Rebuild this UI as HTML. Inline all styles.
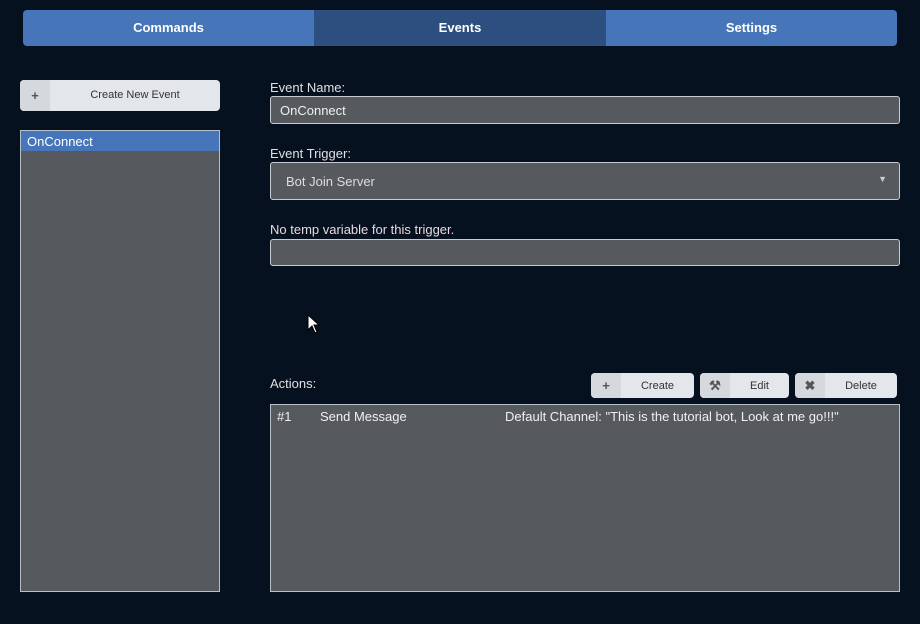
<!DOCTYPE html>
<html><head><style>
*{box-sizing:border-box;margin:0;padding:0}
body{width:920px;height:624px;background:#06111f;font-family:"Liberation Sans",sans-serif;position:relative;overflow:hidden;color:#e6e6e6}
.abs{position:absolute}
.tab{position:absolute;top:10px;height:36px;color:#fff;font-weight:bold;font-size:13px;text-align:center;line-height:36px}
.lbl{position:absolute;font-size:13px;color:#e0e0e0}
.inp{position:absolute;background:#56595e;border:1px solid #c8ccd0;border-radius:3px;font-size:13px;color:#f0f0f0}
.btn{position:absolute;background:#e3e6ea;border-radius:4px;font-size:11px;color:#333;height:25px;line-height:27px;overflow:hidden}
.btn .ic{position:absolute;left:0;top:0;width:30px;height:100%;background:#d5d8dc;text-align:center;color:#555;font-weight:bold;font-size:13px;line-height:25px}
.btn .t{position:absolute;left:30px;right:0;text-align:center}
</style></head><body>
<div class="tab" style="left:23px;width:291px;background:#4775b9;border-radius:4px 0 0 4px">Commands</div>
<div class="tab" style="left:314px;width:292px;background:#2d4f7f">Events</div>
<div class="tab" style="left:606px;width:291px;background:#4775b9;border-radius:0 4px 4px 0">Settings</div>

<div class="btn" style="left:20px;top:80px;width:200px;height:31px;line-height:31px"><div class="ic" style="line-height:31px">+</div><div class="t">Create New Event</div></div>
<div class="abs" style="left:20px;top:130px;width:200px;height:462px;background:#56595e;border:1px solid #b8c0c8">
<div style="background:#4775b9;height:20px;line-height:22px;padding-left:6px;font-size:13px;color:#fff">OnConnect</div></div>

<div class="lbl" style="left:270px;top:80px">Event Name:</div>
<div class="inp" style="left:270px;top:96px;width:630px;height:28px;line-height:27px;padding-left:9px">OnConnect</div>
<div class="lbl" style="left:270px;top:146px">Event Trigger:</div>
<div class="inp" style="left:270px;top:162px;width:630px;height:38px;line-height:37px;padding-left:15px;color:#ddd">Bot Join Server<span style="position:absolute;right:12px;top:-2px;font-size:9px;color:#ccc">▼</span></div>
<div class="lbl" style="left:270px;top:222px;color:#ead8e0">No temp variable for this trigger.</div>
<div class="inp" style="left:270px;top:239px;width:630px;height:27px"></div>

<svg class="abs" style="left:307px;top:314px" width="14" height="20"><path d="M1 1 L1 16 L5 12 L8 19 L10 18 L7 11 L12 11 Z" fill="#fff" stroke="#000" stroke-width="1"/></svg>

<div class="lbl" style="left:270px;top:376px">Actions:</div>
<div class="btn" style="left:591px;top:373px;width:103px"><div class="ic">+</div><div class="t">Create</div></div>
<div class="btn" style="left:700px;top:373px;width:89px"><div class="ic">⚒</div><div class="t">Edit</div></div>
<div class="btn" style="left:795px;top:373px;width:102px"><div class="ic">✖</div><div class="t">Delete</div></div>
<div class="inp" style="left:270px;top:404px;width:630px;height:188px;border-radius:0;border-color:#b8c0c8">
<span class="abs" style="left:6px;top:4px">#1</span><span class="abs" style="left:49px;top:4px">Send Message</span><span class="abs" style="left:234px;top:4px">Default Channel: "This is the tutorial bot, Look at me go!!!"</span></div>
</body></html>
